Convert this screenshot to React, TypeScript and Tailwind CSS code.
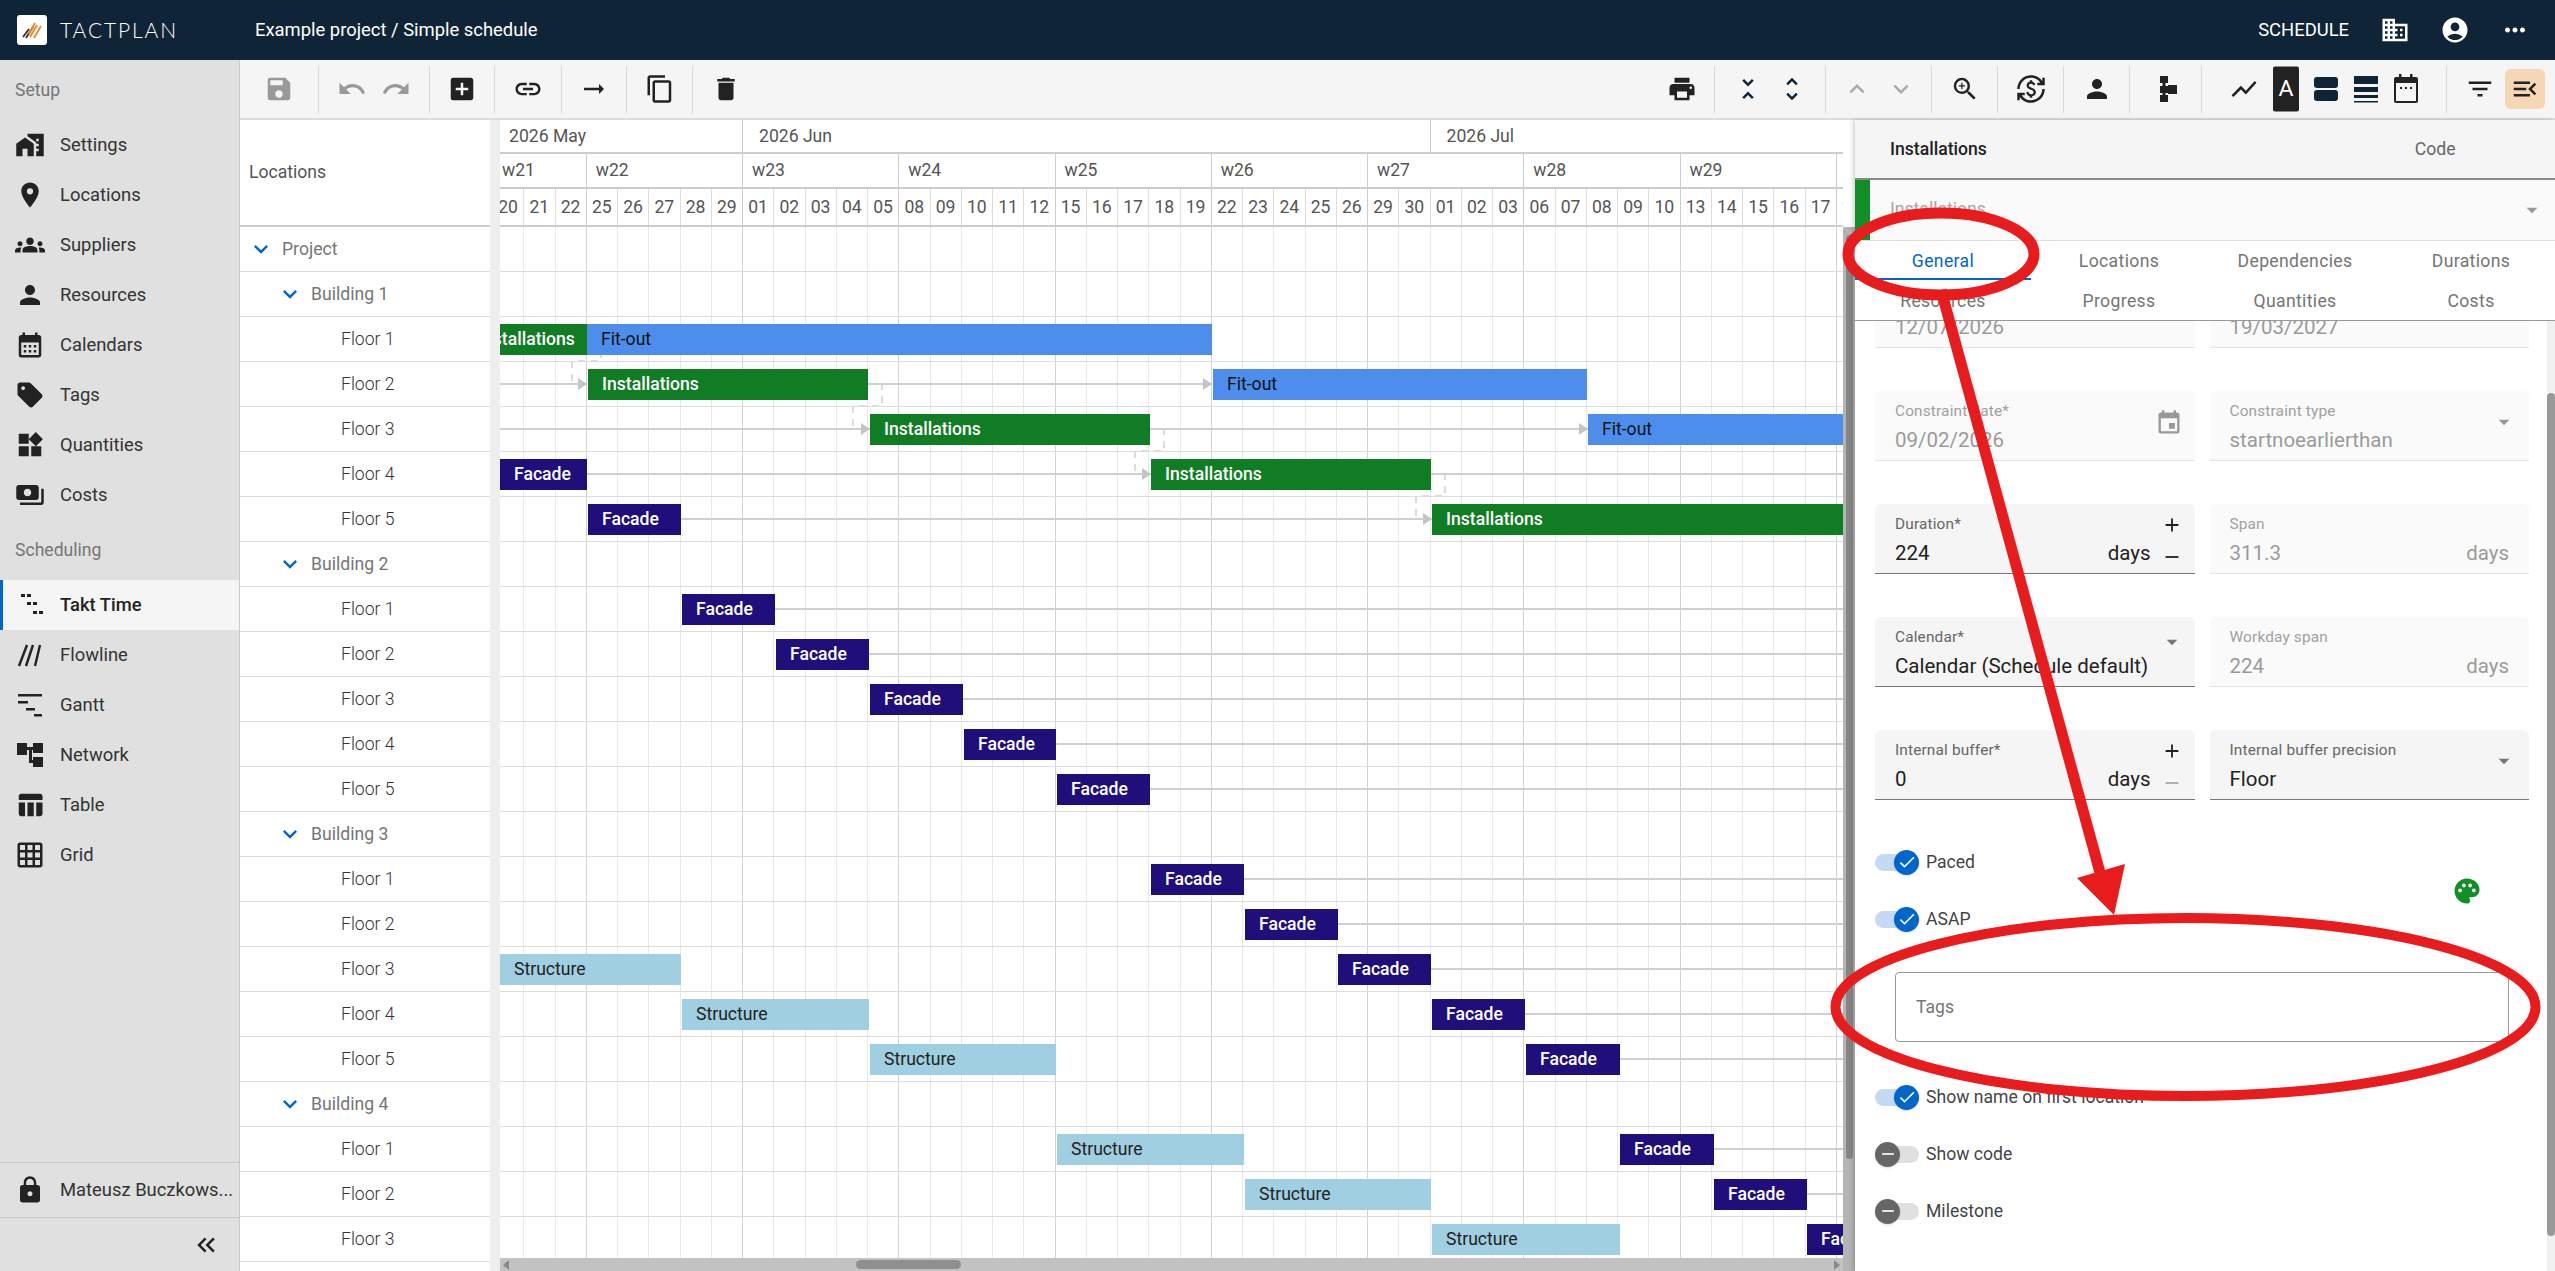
import {
  MdHomeWork, MdLocationOn, MdGroups, MdPerson, MdCalendarMonth, MdSell, MdWidgets, MdPayments,
  MdTableChart, MdGridOn, MdLock, MdKeyboardDoubleArrowLeft, MdExpandMore, MdSave, MdUndo, MdRedo,
  MdAddBox, MdLink, MdContentCopy, MdDelete, MdPrint, MdUnfoldLess, MdUnfoldMore, MdKeyboardArrowUp,
  MdKeyboardArrowDown, MdZoomIn, MdCurrencyExchange, MdShowChart, MdFilterList, MdMenuOpen, MdDomain,
  MdAccountCircle, MdMoreHoriz, MdEvent, MdArrowDropDown, MdAdd, MdRemove, MdPalette, MdCheck,
  MdArrowRightAlt,
} from "react-icons/md"
import type { ReactNode } from "react"

const setup = [
  { label: "Settings", Icon: MdHomeWork },
  { label: "Locations", Icon: MdLocationOn },
  { label: "Suppliers", Icon: MdGroups },
  { label: "Resources", Icon: MdPerson },
  { label: "Calendars", Icon: MdCalendarMonth },
  { label: "Tags", Icon: MdSell },
  { label: "Quantities", Icon: MdWidgets },
  { label: "Costs", Icon: MdPayments },
]

function TaktIcon() {
  return (
    <svg width="30" height="30" viewBox="0 0 30 30" fill="#222">
      <rect x="4" y="4" width="4" height="3" />
      <rect x="10" y="4" width="4" height="3" />
      <rect x="10" y="12" width="4" height="3" />
      <rect x="16" y="12" width="4" height="3" />
      <rect x="16" y="21" width="4" height="3" />
      <rect x="22" y="21" width="4" height="3" />
    </svg>
  )
}

function FlowIcon() {
  return (
    <svg width="30" height="30" viewBox="0 0 30 30" stroke="#222" strokeWidth="2.4" fill="none">
      <path d="M4 26 L12 5" />
      <path d="M11 26 L18 5" />
      <path d="M20 26 L25 5" />
    </svg>
  )
}

function GanttIcon() {
  return (
    <svg width="30" height="30" viewBox="0 0 30 30" fill="#222">
      <rect x="3" y="4" width="24" height="2.5" />
      <rect x="3" y="11" width="10" height="2.5" />
      <rect x="11" y="18" width="9" height="2.5" />
      <rect x="19" y="24" width="8" height="2.5" />
    </svg>
  )
}

function NetworkIcon() {
  return (
    <svg width="30" height="30" viewBox="0 0 30 30" fill="#222">
      <rect x="2" y="3" width="10" height="12" />
      <rect x="18" y="3" width="10" height="10" />
      <rect x="18" y="17" width="10" height="10" />
      <rect x="12" y="7" width="6" height="3" />
      <rect x="14" y="7" width="3" height="16" />
      <rect x="14" y="20" width="4" height="3" />
    </svg>
  )
}

const scheduling = [
  { label: "Takt Time", Icon: TaktIcon, active: true },
  { label: "Flowline", Icon: FlowIcon },
  { label: "Gantt", Icon: GanttIcon },
  { label: "Network", Icon: NetworkIcon },
  { label: "Table", Icon: MdTableChart },
  { label: "Grid", Icon: MdGridOn },
]

type Row = { name: string; level: 0 | 1 | 2 }
const floors = (n: number): Row[] =>
  Array.from({ length: n }, (_, i) => ({ name: `Floor ${i + 1}`, level: 2 as const }))

const rows: Row[] = [
  { name: "Project", level: 0 },
  { name: "Building 1", level: 1 },
  ...floors(5),
  { name: "Building 2", level: 1 },
  ...floors(5),
  { name: "Building 3", level: 1 },
  ...floors(5),
  { name: "Building 4", level: 1 },
  ...floors(3),
]

type Kind = "install" | "fitout" | "facade" | "structure"
const kindClass: Record<Kind, string> = {
  install: "bg-[#107c23] text-white font-medium",
  fitout: "bg-[#4d8eec] text-[#111]",
  facade: "bg-[#200e7a] text-white font-medium",
  structure: "bg-[#9fcfe0] text-[#222]",
}
const kindLabel: Record<Kind, string> = {
  install: "Installations",
  fitout: "Fit-out",
  facade: "Facade",
  structure: "Structure",
}

// row index, kind, start x, end x (page pixels)
const bars: [number, Kind, number, number][] = [
  [2, "install", 464, 587],
  [2, "fitout", 587, 1212],
  [3, "install", 588, 868],
  [3, "fitout", 1213, 1587],
  [4, "install", 870, 1150],
  [4, "fitout", 1588, 1860],
  [5, "facade", 500, 587],
  [5, "install", 1151, 1431],
  [6, "facade", 588, 681],
  [6, "install", 1432, 1860],
  [8, "facade", 682, 775],
  [9, "facade", 776, 869],
  [10, "facade", 870, 963],
  [11, "facade", 964, 1056],
  [12, "facade", 1057, 1150],
  [14, "facade", 1151, 1244],
  [15, "facade", 1245, 1338],
  [16, "structure", 500, 681],
  [16, "facade", 1338, 1431],
  [17, "structure", 682, 869],
  [17, "facade", 1432, 1525],
  [18, "structure", 870, 1056],
  [18, "facade", 1526, 1620],
  [20, "structure", 1057, 1244],
  [20, "facade", 1620, 1714],
  [21, "structure", 1245, 1431],
  [21, "facade", 1714, 1807],
  [22, "structure", 1432, 1620],
  [22, "facade", 1807, 1900],
]

// row, from, to, arrow at the end
const lines: [number, number, number, boolean][] = [
  [3, 500, 587, true],
  [3, 868, 1212, true],
  [4, 500, 870, true],
  [4, 1150, 1588, true],
  [5, 587, 1151, true],
  [5, 1431, 1860, false],
  [6, 681, 1432, true],
  [8, 775, 1860, false],
  [9, 869, 1860, false],
  [10, 963, 1860, false],
  [11, 1056, 1860, false],
  [12, 1150, 1860, false],
  [14, 1244, 1860, false],
  [15, 1338, 1860, false],
  [16, 1431, 1860, false],
  [17, 1525, 1860, false],
  [18, 1620, 1860, false],
  [20, 1714, 1860, false],
  [21, 1807, 1860, false],
]

const links: [number, number][] = [
  [2, 587],
  [3, 868],
  [4, 1150],
  [5, 1431],
]

const weeks = [
  { name: "w21", days: ["20", "21", "22"] },
  { name: "w22", days: ["25", "26", "27", "28", "29"] },
  { name: "w23", days: ["01", "02", "03", "04", "05"] },
  { name: "w24", days: ["08", "09", "10", "11", "12"] },
  { name: "w25", days: ["15", "16", "17", "18", "19"] },
  { name: "w26", days: ["22", "23", "24", "25", "26"] },
  { name: "w27", days: ["29", "30", "01", "02", "03"] },
  { name: "w28", days: ["06", "07", "08", "09", "10"] },
  { name: "w29", days: ["13", "14", "15", "16", "17"] },
  { name: "w30", days: ["20", "21"] },
]

const months = [
  { name: "2026 May", days: 8 },
  { name: "2026 Jun", days: 22 },
  { name: "2026 Jul", days: 20 },
]

const DAY = 31.25
const CHART_X = 500
const cy = (row: number) => 45 * row + 22

function ToolGroup({ w, children, last }: { w: number; children?: ReactNode; last?: boolean }) {
  return (
    <div
      className={`h-[47px] flex items-center justify-center gap-[14px] text-[#222] ${last ? "" : "border-r border-[#d8d8d8]"}`}
      style={{ width: w }}
    >
      {children}
    </div>
  )
}

function SideItem({ label, Icon, active }: { label: string; Icon: (p: { size?: number }) => ReactNode; active?: boolean }) {
  return (
    <div className={`h-[50px] flex items-center text-[18.4px] ${active ? "bg-[#f5f5f5] border-l-[3px] border-[#0066cc] font-medium text-[#222]" : "text-[#333]"}`}>
      <div className={`flex justify-center text-[#222] ${active ? "w-[57px]" : "w-[60px]"}`}>
        <Icon size={30} />
      </div>
      <span>{label}</span>
    </div>
  )
}

function Field({ label, value, unit, dim, icon, stepper, minusDim }: {
  label: string
  value: string
  unit?: string
  dim?: boolean
  icon?: ReactNode
  stepper?: boolean
  minusDim?: boolean
}) {
  return (
    <div className={`relative h-[70px] flex-1 rounded-t-[6px] border-b px-[20px] pt-[10px] ${dim ? "bg-[#fafafa] border-[#e4e4e4]" : "bg-[#f5f5f5] border-[#777]"}`}>
      <div className={`text-[15.4px] tracking-[0.01em] leading-[20px] ${dim ? "text-[#a0a0a0]" : "text-[#666]"}`}>{label}</div>
      <div className={`mt-[6px] flex items-center text-[20.5px] leading-[26px] ${dim ? "text-[#9a9a9a]" : "text-[#222]"}`}>
        <span className="flex-1 whitespace-nowrap">{value}</span>
        {unit && <span className={stepper ? "mr-[24px]" : ""}>{unit}</span>}
      </div>
      {icon && <div className="absolute right-[12px] top-[18px]">{icon}</div>}
      {stepper && (
        <div className="absolute right-[12px] top-[10px] flex flex-col items-center gap-[10px] text-[#222]">
          <MdAdd size={22} />
          <span className={minusDim ? "text-[#aaa]" : ""}>
            <MdRemove size={22} />
          </span>
        </div>
      )}
    </div>
  )
}

function Toggle({ label, on }: { label: string; on?: boolean }) {
  return (
    <div className="h-[26px] flex items-center text-[17.6px] text-[#444]">
      <div className={`relative w-[44px] h-[17px] rounded-full ${on ? "bg-[#c4d9f2]" : "bg-[#e0e0e0]"}`}>
        <div className={`absolute top-[-4px] w-[25px] h-[25px] rounded-full shadow flex items-center justify-center text-white ${on ? "left-[19px] bg-[#0066cc]" : "left-0 bg-[#666]"}`}>
          {on ? <MdCheck size={20} /> : <MdRemove size={20} />}
        </div>
      </div>
      <span className="ml-[7px]">{label}</span>
    </div>
  )
}

export default function App() {
  return (
    <div className="relative w-[2555px] h-[1271px] overflow-hidden flex flex-col bg-white font-['Roboto',sans-serif]">
      <header className="h-[60px] shrink-0 bg-[#0f2537] text-white flex items-center">
        <div className="ml-[17px] w-[30px] h-[30px] rounded-[3px] bg-white flex items-center justify-center">
          <svg width="24" height="20" viewBox="0 0 24 20" fill="none" strokeWidth="1.8">
            <path d="M3 17 L9 9" stroke="#333" />
            <path d="M6 18 L13 7" stroke="#333" />
            <path d="M10 17 L17 5" stroke="#e98a24" />
            <path d="M14 18 L21 6" stroke="#e98a24" />
            <path d="M9 14 L15 3" stroke="#e98a24" />
          </svg>
        </div>
        <span className="ml-[13px] w-[195px] text-[21px] font-['Lato',sans-serif] font-light tracking-[0.09em]">TACTPLAN</span>
        <span className="text-[18.4px]">Example project / Simple schedule</span>
        <div className="flex-1" />
        <span className="text-[18.4px]">SCHEDULE</span>
        <span className="ml-[31px]"><MdDomain size={30} /></span>
        <span className="ml-[30px]"><MdAccountCircle size={30} /></span>
        <span className="ml-[30px] mr-[25px]"><MdMoreHoriz size={30} /></span>
      </header>

      <div className="flex-1 flex min-h-0">
        <aside className="w-[240px] shrink-0 bg-[#e0e0e0] border-r border-[#c8c8c8] flex flex-col">
          <div className="h-[60px] flex items-center pl-[15px] text-[17.6px] text-[#757575]">Setup</div>
          {setup.map((s) => <SideItem key={s.label} {...s} />)}
          <div className="h-[60px] mt-[0px] flex items-center pl-[15px] text-[17.6px] text-[#757575]">Scheduling</div>
          {scheduling.map((s) => <SideItem key={s.label} {...s} />)}
          <div className="flex-1" />
          <div className="h-[56px] border-y border-[#c8c8c8] flex items-center">
            <div className="w-[60px] flex justify-center text-[#222]"><MdLock size={30} /></div>
            <span className="text-[18.4px] text-[#333]">Mateusz Buczkows...</span>
          </div>
          <div className="h-[53px] flex items-center justify-end pr-[18px] text-[#222]"><MdKeyboardDoubleArrowLeft size={30} /></div>
        </aside>

        <main className="flex-1 min-w-0 flex flex-col">
          <div className="h-[60px] shrink-0 bg-[#f5f5f5] border-b-2 border-[#dcdcdc] flex items-center">
            <ToolGroup w={79}><span className="text-[#999]"><MdSave size={30} /></span></ToolGroup>
            <ToolGroup w={111}>
              <span className="text-[#999]"><MdUndo size={30} /></span>
              <span className="text-[#999]"><MdRedo size={30} /></span>
            </ToolGroup>
            <ToolGroup w={65}><MdAddBox size={30} /></ToolGroup>
            <ToolGroup w={67}><MdLink size={30} /></ToolGroup>
            <ToolGroup w={65}><MdArrowRightAlt size={30} /></ToolGroup>
            <ToolGroup w={66}><MdContentCopy size={30} /></ToolGroup>
            <ToolGroup w={66} last><MdDelete size={30} /></ToolGroup>
            <div className="flex-1" />
            <ToolGroup w={65}><MdPrint size={30} /></ToolGroup>
            <ToolGroup w={111}>
              <span className="text-[#0f2537]"><MdUnfoldLess size={30} /></span>
              <span className="text-[#0f2537]"><MdUnfoldMore size={30} /></span>
            </ToolGroup>
            <ToolGroup w={106}>
              <span className="text-[#aaa]"><MdKeyboardArrowUp size={30} /></span>
              <span className="text-[#aaa]"><MdKeyboardArrowDown size={30} /></span>
            </ToolGroup>
            <ToolGroup w={66}><MdZoomIn size={30} /></ToolGroup>
            <ToolGroup w={66}><MdCurrencyExchange size={30} /></ToolGroup>
            <ToolGroup w={66}><MdPerson size={30} /></ToolGroup>
            <ToolGroup w={72}>
              <svg width="30" height="30" viewBox="0 0 30 30" fill="#222">
                <rect x="9" y="2" width="8" height="7" />
                <rect x="9" y="12" width="8" height="7" />
                <rect x="9" y="21" width="8" height="7" />
                <rect x="11.5" y="2" width="3" height="26" />
                <rect x="17" y="11" width="9" height="9" />
              </svg>
            </ToolGroup>
            <ToolGroup w={245}>
              <span className="flex items-center gap-[14px]">
                <MdShowChart size={30} />
                <span className="w-[26px] h-[46px] mt-0 scale-y-[0.98] rounded-[2px] bg-[#222] text-white text-[23px] leading-[46px] text-center">A</span>
                <svg width="26" height="30" viewBox="0 0 26 30" fill="#0f2537">
                  <rect x="1" y="3" width="24" height="11" rx="3" />
                  <rect x="1" y="16" width="24" height="11" rx="3" />
                </svg>
                <svg width="26" height="30" viewBox="0 0 26 30" fill="#0f2537">
                  <rect x="1" y="2" width="24" height="8" />
                  <rect x="1" y="13" width="24" height="5" />
                  <rect x="1" y="21" width="24" height="3" />
                  <rect x="1" y="27" width="24" height="1.5" />
                </svg>
                <svg width="26" height="32" viewBox="0 0 26 32" fill="#222">
                  <rect x="6" y="1" width="2.5" height="4" />
                  <rect x="17" y="1" width="2.5" height="4" />
                  <path fillRule="evenodd" d="M3 4 H23 A2 2 0 0 1 25 6 V28 A2 2 0 0 1 23 30 H3 A2 2 0 0 1 1 28 V6 A2 2 0 0 1 3 4 Z M3 10 V28 H23 V10 Z" />
                  <rect x="7" y="14" width="2" height="2" />
                  <rect x="12" y="14" width="2" height="2" />
                  <rect x="17" y="14" width="2" height="2" />
                </svg>
              </span>
            </ToolGroup>
            <div className="w-[108px] h-[47px] flex items-center text-[#222]">
              <span className="ml-[18px]"><MdFilterList size={30} /></span>
              <span className="ml-[10px] w-[40px] h-[40px] rounded-[6px] bg-[#f5d6b5] flex items-center justify-center"><span className="scale-x-[1]"><MdMenuOpen size={30} /></span></span>
            </div>
          </div>

          <div className="flex-1 min-h-0 flex">
            {/* locations */}
            <div className="w-[250px] shrink-0 overflow-hidden">
              <div className="h-[107px] border-b-2 border-[#ccc] flex items-center pl-[9px] text-[17.6px] text-[#555]">Locations</div>
              {rows.map((r, i) => (
                <div key={i} className="h-[45px] shrink-0 border-b border-[#ddd] flex items-center text-[17.6px]">
                  {r.level === 2 ? (
                    <span className="ml-[101px] font-light text-[#333]">{r.name}</span>
                  ) : (
                    <span className={`flex items-center text-[#757575] ${r.level === 0 ? "ml-[7px]" : "ml-[36px]"}`}>
                      <span className="w-[28px] text-[#0066cc]"><MdExpandMore size={28} /></span>
                      <span className="ml-[7px]">{r.name}</span>
                    </span>
                  )}
                </div>
              ))}
            </div>
            <div className="w-[10px] shrink-0 bg-[#eeeeee]" />

            {/* chart */}
            <div className="w-[1343px] shrink-0 flex flex-col min-h-0">
              <div className="h-[107px] shrink-0 overflow-hidden border-b-2 border-[#ccc] text-[17.6px] text-[#555]">
                <div className="h-[34px] flex -ml-[7px] w-[1700px] border-b-2 border-[#ccc]">
                  {months.map((m) => (
                    <div key={m.name} className="shrink-0 border-r border-[#ccc] flex items-center pl-[16px]" style={{ width: m.days * DAY }}>{m.name}</div>
                  ))}
                </div>
                <div className="h-[35px] flex -ml-[7px] w-[1700px] border-b-2 border-[#ccc]">
                  {weeks.map((w) => (
                    <div key={w.name} className="shrink-0 border-r border-[#ccc] flex items-center pl-[9px]" style={{ width: w.days.length * DAY }}>{w.name}</div>
                  ))}
                </div>
                <div className="h-[36px] flex -ml-[7px] w-[1700px]">
                  {weeks.flatMap((w) => w.days.map((d, i) => (
                    <div key={w.name + d} className={`shrink-0 flex items-center justify-center border-r ${i === w.days.length - 1 ? "border-[#ccc]" : "border-[#ddd]"}`} style={{ width: DAY }}>{d}</div>
                  )))}
                </div>
              </div>

              <div className="relative flex-1 min-h-0 overflow-hidden">
                <div className="absolute inset-y-0 -left-[7px] flex">
                  {weeks.flatMap((w) => w.days.map((d, i) => (
                    <div key={w.name + d} className={`shrink-0 border-r ${i === w.days.length - 1 ? "border-[#d2d2d2]" : "border-[#e8e8e8]"}`} style={{ width: DAY }} />
                  )))}
                </div>
                <svg className="absolute inset-0 z-10" width="1343" height="1035" fill="none">
                  {lines.map(([row, a, b, arrow], i) => (
                    <g key={i}>
                      <line x1={a - CHART_X} x2={b - CHART_X} y1={cy(row)} y2={cy(row)} stroke="#cfcfcf" strokeWidth="2" />
                      {arrow && <path d={`M${b - CHART_X - 9} ${cy(row) - 6} L${b - CHART_X} ${cy(row)} L${b - CHART_X - 9} ${cy(row) + 6} Z`} fill="#c4c4c4" />}
                    </g>
                  ))}
                  {links.map(([row, x], i) => {
                    const lx = x - CHART_X
                    const y = cy(row)
                    return (
                      <path key={i} d={`M${lx} ${y} H${lx + 14} V${y + 22} H${lx - 15} V${y + 45} H${lx - 6}`} stroke="#cfcfcf" strokeWidth="1.5" strokeDasharray="7 6" />
                    )
                  })}
                </svg>
                <div className="relative z-20">
                  {rows.map((r, i) => (
                    <div key={i} className="relative h-[45px] border-b border-[#ddd]">
                      {bars.filter((b) => b[0] === i).map(([, kind, a, b]) => (
                        <div
                          key={a}
                          className={`absolute top-[7px] h-[31px] flex items-center pl-[14px] text-[17.6px] whitespace-nowrap overflow-hidden ${kindClass[kind]}`}
                          style={{ left: a - CHART_X, width: b - a }}
                        >
                          {kindLabel[kind]}
                        </div>
                      ))}
                    </div>
                  ))}
                </div>
              </div>

              {/* horizontal scrollbar */}
              <div className="h-[13px] shrink-0 bg-[#c2c2c2] flex items-center relative">
                <div className="ml-[3px] w-0 h-0 border-y-[5px] border-y-transparent border-r-[6px] border-r-[#888]" />
                <div className="ml-[347px] w-[105px] h-[9px] rounded-full bg-[#8f8f8f]" />
                <div className="absolute right-[3px] w-0 h-0 border-y-[5px] border-y-transparent border-l-[6px] border-l-[#888]" />
              </div>
            </div>

            {/* gantt vertical scrollbar */}
            <div className="w-[12px] shrink-0 flex flex-col">
              <div className="h-[107px] bg-white" />
              <div className="flex-1 bg-[#b4b4b4] flex justify-center">
                <div className="mt-[8px] w-[7px] h-[924px] rounded-full bg-[#858585]" />
              </div>
            </div>

            {/* side panel */}
            <div className="flex-1 min-w-0 flex flex-col shadow-[-2px_0_4px_rgba(0,0,0,0.18)] z-30 bg-white">
              <div className="h-[60px] shrink-0 bg-[#f5f5f5] border-b-2 border-[#888] flex items-center text-[17.6px]">
                <span className="ml-[35px] font-medium text-[#222]">Installations</span>
                <span className="ml-[428px] text-[#666]">Code</span>
              </div>
              <div className="h-[60px] shrink-0 bg-[#fafafa] flex items-center">
                <div className="w-[15px] h-full bg-[#0f8f26]" />
                <span className="ml-[20px] mt-[-2px] text-[17.6px] text-[#a8a8a8] flex-1">Installations</span>
                <span className="mr-[10px] text-[#999]"><MdArrowDropDown size={26} /></span>
              </div>
              <div className="h-[81px] shrink-0 border-y border-[#e0e0e0] border-b-[#999] relative">
                <div className="grid grid-cols-4 w-[704px] text-[17.6px] tracking-[0.02em] text-[#757575] text-center">
                  {["General", "Locations", "Dependencies", "Durations", "Resources", "Progress", "Quantities", "Costs"].map((t) => (
                    <div key={t} className={`h-[40px] flex items-center justify-center ${t === "General" ? "text-[#0066cc]" : ""}`}>{t}</div>
                  ))}
                </div>
                <div className="absolute left-0 top-[37px] w-[176px] h-[2px] bg-[#0066cc]" />
              </div>

              <div className="flex-1 min-h-0 flex overflow-hidden">
                <div className="flex-1 min-w-0 pl-[20px] pr-[18px] flex flex-col gap-[43px] -mt-[43px]">
                  <div className="flex gap-[15px]">
                    <Field dim label="Start date*" value="12/07/2026" icon={<span className="text-[#999]"><MdEvent size={28} /></span>} />
                    <Field dim label="End date" value="19/03/2027" icon={<span className="text-[#999]"><MdEvent size={28} /></span>} />
                  </div>
                  <div className="flex gap-[15px]">
                    <Field dim label="Constraint date*" value="09/02/2026" icon={<span className="text-[#999]"><MdEvent size={28} /></span>} />
                    <Field dim label="Constraint type" value="startnoearlierthan" icon={<span className="text-[#999]"><MdArrowDropDown size={26} /></span>} />
                  </div>
                  <div className="flex gap-[15px]">
                    <Field label="Duration*" value="224" unit="days" stepper />
                    <Field dim label="Span" value="311.3" unit="days" />
                  </div>
                  <div className="flex gap-[15px]">
                    <Field label="Calendar*" value="Calendar (Schedule default)" icon={<span className="text-[#777] relative -top-[6px] -right-[2px] block"><MdArrowDropDown size={26} /></span>} />
                    <Field dim label="Workday span" value="224" unit="days" />
                  </div>
                  <div className="flex gap-[15px]">
                    <Field label="Internal buffer*" value="0" unit="days" stepper minusDim />
                    <Field label="Internal buffer precision" value="Floor" icon={<span className="text-[#777]"><MdArrowDropDown size={26} /></span>} />
                  </div>
                  <div className="relative flex flex-col -mt-[-6px]">
                    <Toggle on label="Paced" />
                    <div className="mt-[31px]"><Toggle on label="ASAP" /></div>
                    <div className="absolute right-[47px] top-[27px] text-[#0f8f26]"><MdPalette size={30} /></div>
                    <div className="mt-[40px] ml-[20px] mr-[20px] h-[70px] rounded-[4px] border border-[#999] flex items-center pl-[20px] text-[17.6px] text-[#777]">Tags</div>
                    <div className="mt-[42px]"><Toggle on label="Show name on first location" /></div>
                    <div className="mt-[31px]"><Toggle label="Show code" /></div>
                    <div className="mt-[31px]"><Toggle label="Milestone" /></div>
                  </div>
                </div>
                <div className="w-[8px] shrink-0 mr-[0px] ml-[0px] bg-[#f1f1f1] flex flex-col">
                  <div className="mt-[72px] h-[843px] w-[8px] rounded-full bg-[#999]" />
                </div>
              </div>
            </div>
          </div>
        </main>
      </div>

      {/* red annotation drawn over the shot */}
      <svg className="absolute inset-0 z-50 pointer-events-none" width="2555" height="1271" fill="none">
        <ellipse cx="1941" cy="254" rx="93" ry="41" stroke="#e81c1c" strokeWidth="11" />
        <ellipse cx="2185.5" cy="1007" rx="350" ry="89" stroke="#e81c1c" strokeWidth="10" />
        <line x1="1941" y1="290" x2="2102" y2="880" stroke="#e81c1c" strokeWidth="11" />
        <path d="M2077 878 L2125 864 L2114 915 Z" fill="#e81c1c" />
      </svg>
    </div>
  )
}
